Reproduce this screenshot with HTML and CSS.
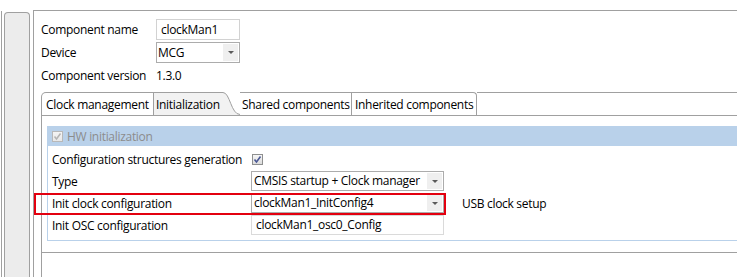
FILE: index.html
```html
<!DOCTYPE html>
<html lang="en">
<head>
  <meta charset="UTF-8">
  <meta name="viewport" content="width=device-width, initial-scale=1.0">
  <title>clockMan1 - Component Inspector</title>
  <link rel="stylesheet" href="styles.css">
</head>
<body>

  <div class="window">
    <div class="rail"></div>
    <div class="side-tab"></div>

    <div class="inspector">
      <div class="general">
        <span class="label">Component name</span>
        <div class="textbox name-box">clockMan1</div>

        <span class="label">Device</span>
        <div class="combo device-combo">
          <span class="combo-text">MCG</span>
          <span class="combo-btn"><i class="arrow"></i></span>
        </div>

        <span class="label">Component version</span>
        <span class="version">1.3.0</span>
      </div>

      <div class="tab-folder">
        <div class="tab-strip">
          <div class="tab tab-clock">Clock management</div>
          <div class="tab tab-init">Initialization</div>
          <svg class="swoosh" width="18" height="23" viewBox="0 0 18 23">
            <path d="M0 0 L1 0 C8 0 9 22 18 22 L18 23 L0 23 Z" fill="#f2f2f2"/>
            <path d="M0 0.5 L1 0.5 C8 0.5 9 22.5 18 22.5" fill="none" stroke="#a0a0a0" stroke-width="1"/>
          </svg>
          <div class="tab tab-shared">Shared components</div>
          <div class="tab tab-inherited">Inherited components</div>
          <div class="tab-filler"></div>
        </div>

        <div class="tab-body">
          <div class="props">
            <div class="props-header">
              <span class="check disabled">
                <svg width="11" height="11" viewBox="0 0 11 11"><path d="M2.5 5.5 L4.5 8 L8.5 2.5" fill="none" stroke="#b4b4b4" stroke-width="1.5"/></svg>
              </span>
              <span>HW initialization</span>
            </div>

            <div class="props-grid">
              <span class="label">Configuration structures generation</span>
              <span class="check">
                <svg width="11" height="11" viewBox="0 0 11 11"><path d="M2.5 5.5 L4.5 8 L8.5 2.5" fill="none" stroke="#4a5894" stroke-width="1.6"/></svg>
              </span>
              <span></span>

              <span class="label">Type</span>
              <div class="combo">
                <span class="combo-text">CMSIS startup + Clock manager</span>
                <span class="combo-btn"><i class="arrow"></i></span>
              </div>
              <span></span>

              <span class="label">Init clock configuration</span>
              <div class="combo">
                <span class="combo-text">clockMan1_InitConfig4</span>
                <span class="combo-btn"><i class="arrow"></i></span>
              </div>
              <span class="note">USB clock setup</span>

              <span class="label">Init OSC configuration</span>
              <div class="textbox osc-box">clockMan1_osc0_Config</div>
              <span></span>
            </div>
          </div>
        </div>
        <div class="folder-rest"></div>
      </div>
    </div>
  </div>

  <!-- annotation drawn over the screenshot -->
  <div class="highlight"></div>

</body>
</html>
```

FILE: styles.css
```css
* { box-sizing: border-box; }
body { margin: 0; width: 737px; height: 277px; overflow: hidden; background: #fff; font-family: "Open Sans", "Noto Sans", Arial, sans-serif; font-size: 12px; letter-spacing: -0.3px; color: #000; position: relative; }

.window { display: flex; height: 277px; }
.rail { width: 3px; margin-left: 1px; margin-top: 11px; border-left: 1px solid #a0a0a0; }
.side-tab { width: 26px; margin-top: 12px; background: #ececec; border: 1px solid #a0a0a0; border-bottom: none; border-radius: 4px 4px 0 0; }
.inspector { flex: 1; margin-left: 3px; margin-top: 10px; border-top: 1px solid #a0a0a0; border-left: 1px solid #a0a0a0; padding: 8px 0 0 7px; display: flex; flex-direction: column; }

/* general section */
.general { display: grid; grid-template-columns: 115px 84px; grid-template-rows: 21px 21px 20px; row-gap: 2px; align-items: center; }
.label { white-space: nowrap; }
.textbox { height: 21px; border: 1px solid #d2d2d2; background: #fff; padding-left: 4px; line-height: 19px; white-space: nowrap; overflow: hidden; }
.combo { height: 21px; border: 1px solid #acacac; background: #fff; display: flex; align-items: stretch; }
.combo-text { flex: 1; padding-left: 2px; line-height: 19px; white-space: nowrap; overflow: hidden; }
.combo-btn { width: 15px; margin: 1px; background: #efefef; display: flex; align-items: center; justify-content: center; }
.arrow { width: 0; height: 0; border-left: 3px solid transparent; border-right: 3px solid transparent; border-top: 3px solid #5a5a5a; }
.device-combo .combo-text { padding-left: 1px; }

/* tab folder */
.tab-folder { flex: 1; margin-top: 7px; display: flex; flex-direction: column; }
.tab-strip { display: flex; height: 24px; border-bottom: 1px solid #a0a0a0; }
.tab { height: 23px; border-top: 1px solid #a0a0a0; padding-top: 1px; line-height: 21px; white-space: nowrap; overflow: hidden; background: #fff; }
.tab-clock { width: 113px; padding-left: 4px; border-left: 1px solid #a0a0a0; border-right: 1px solid #a0a0a0; border-top-left-radius: 5px; }
.tab-init { width: 68px; padding-left: 2px; background: #f2f2f2; }
.swoosh { display: block; flex: none; }
.tab-shared { width: 112px; padding-left: 2px; border-top: none; padding-top: 2px; border-right: 1px solid #a0a0a0; background: linear-gradient(#a0a0a0, #a0a0a0) top / 100% 1px no-repeat #fff; }
.tab-inherited { width: 125px; padding-left: 3px; border-right: 1px solid #a0a0a0; border-top-right-radius: 4px; }
.tab-filler { flex: 1; border-top: 1px solid #a0a0a0; }

.tab-body { height: 137px; border-left: 1px solid #a0a0a0; border-bottom: 1px solid #a0a0a0; padding: 10px 0 0 5px; }
.folder-rest { flex: 1; border-left: 1px solid #a0a0a0; }

/* property sheet */
.props { border-left: 1px solid #b9d1ea; border-bottom: 1px solid #b9d1ea; }
.props-header { height: 20px; background: #b9d1ea; display: flex; align-items: center; gap: 4px; padding-left: 4px; color: #8c8c8c; }
.props-grid { display: grid; grid-template-columns: 199px 193px auto; grid-template-rows: 22px 22px 22px 22px; align-items: center; padding: 2px 0 4px 4px; }
.props-grid .combo, .props-grid .textbox { height: 20px; }
.props-grid .combo-text { line-height: 18px; }
.osc-box { line-height: 18px; border-color: #dadada; }
.note { margin-left: 18px; white-space: nowrap; }

.check { width: 11px; height: 11px; margin-left: 1px; border: 1px solid #8e8f8f; background: linear-gradient(#f6f6f6, #dcdcdc); display: flex; align-items: center; justify-content: center; }
.check svg { display: block; margin: -1px; }
.check.disabled { margin-left: 0; border-color: #b8b8b8; background: linear-gradient(#f4f4f4, #e8e8e8); }

.highlight { position: absolute; left: 34px; top: 193px; width: 412px; height: 22px; border: 2px solid #e3000f; pointer-events: none; }
```
